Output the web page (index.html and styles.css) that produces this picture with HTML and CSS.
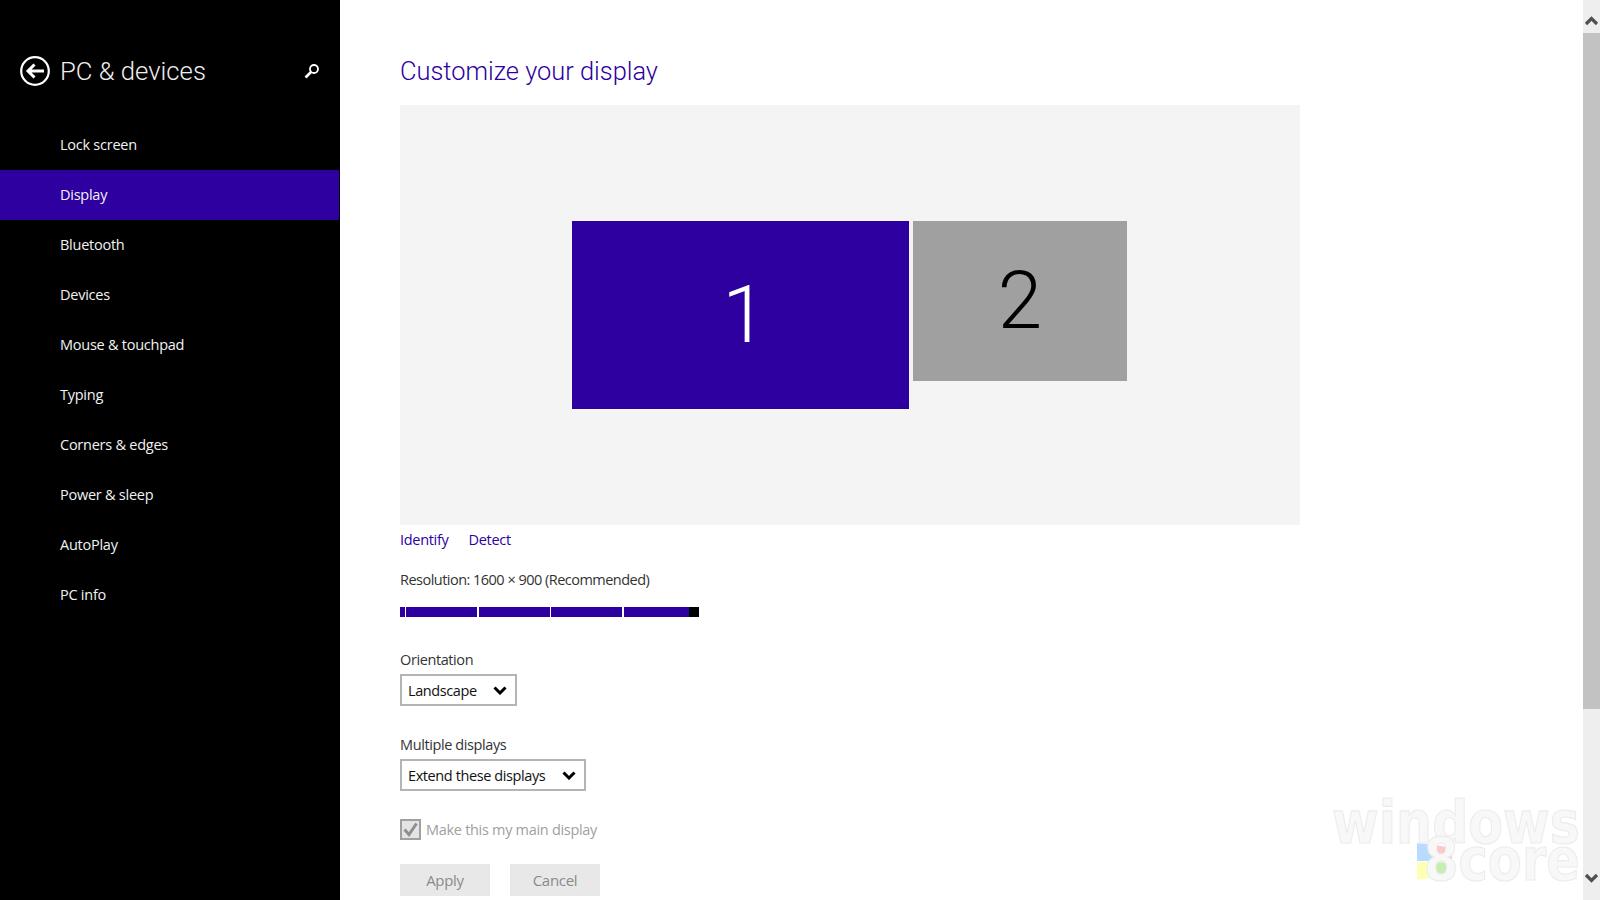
FILE: index.html
```html
<!DOCTYPE html>
<html lang="en">
<head>
<meta charset="utf-8">
<title>PC &amp; devices</title>
<link rel="stylesheet" href="styles.css">
</head>
<body>
<div class="app">
  <aside class="sidebar">
    <header class="side-head">
      <svg class="back" width="32" height="32" viewBox="0 0 32 32"><circle cx="16" cy="16" r="13.8" fill="none" stroke="#fff" stroke-width="2.2"/><path d="M25 16H10M15.500 9.500L9 16l6.500 6.500" fill="none" stroke="#fff" stroke-width="3"/></svg>
      <h1 class="side-title">PC &amp; devices</h1>
      <svg class="search" width="16" height="16" viewBox="0 0 16 16"><circle cx="10" cy="6" r="4" fill="none" stroke="#fff" stroke-width="1.800"/><path d="M7 9L1.500 14.500" stroke="#fff" stroke-width="2.600"/></svg>
    </header>
    <nav class="nav">
      <a class="nav-item">Lock screen</a>
      <a class="nav-item active">Display</a>
      <a class="nav-item">Bluetooth</a>
      <a class="nav-item">Devices</a>
      <a class="nav-item">Mouse &amp; touchpad</a>
      <a class="nav-item">Typing</a>
      <a class="nav-item">Corners &amp; edges</a>
      <a class="nav-item">Power &amp; sleep</a>
      <a class="nav-item">AutoPlay</a>
      <a class="nav-item">PC info</a>
    </nav>
  </aside>
  <main class="content">
    <h2 class="page-title">Customize your display</h2>
    <section class="arrange">
      <div class="monitors">
        <div class="monitor primary"><span>1</span></div>
        <div class="monitor secondary"><span>2</span></div>
      </div>
    </section>
    <div class="links"><a>Identify</a><a>Detect</a></div>
    <p class="res-label">Resolution: 1600 × 900 (Recommended)</p>
    <div class="slider">
      <div class="fill"><i></i><i></i><i></i><i></i></div>
      <div class="thumb"></div>
    </div>
    <label class="field-label first">Orientation</label>
    <div class="select s-orient">Landscape<svg class="chev" width="14" height="9" viewBox="0 0 14 9"><path d="M1.500 1.500L7 7l5.500-5.500" fill="none" stroke="#000" stroke-width="3"/></svg></div>
    <label class="field-label second">Multiple displays</label>
    <div class="select s-multi">Extend these displays<svg class="chev" width="14" height="9" viewBox="0 0 14 9"><path d="M1.500 1.500L7 7l5.500-5.500" fill="none" stroke="#000" stroke-width="3"/></svg></div>
    <div class="check-row">
      <span class="check"><svg width="17" height="17" viewBox="0 0 17 17"><path d="M2.500 8.500l4.500 5L14.500 2.500" fill="none" stroke="#8f8f8f" stroke-width="3"/></svg></span>
      <span>Make this my main display</span>
    </div>
    <div class="buttons"><button class="btn">Apply</button><button class="btn">Cancel</button></div>
  </main>
  <div class="scrollbar">
    <svg width="17" height="33" viewBox="0 0 17 33"><path d="M3 24l5.500-5.500 5.500 5.500" fill="none" stroke="#505050" stroke-width="3.200"/></svg>
    <div class="sb-thumb"></div>
    <svg class="sb-down" width="17" height="33" viewBox="0 0 17 33"><path d="M3 9l5.500 5.500 5.500-5.500" fill="none" stroke="#505050" stroke-width="3.200"/></svg>
  </div>
  <svg class="watermark" width="320" height="128" viewBox="0 0 320 128">
    <polygon points="137,71 155,73 155,89 137,89" fill="#b8dcff"/>
    <polygon points="155,73 172,76 172,90 155,89" fill="#ffc8c8"/>
    <polygon points="137,90 155,90 155,105 137,108" fill="#ffffb4"/>
    <polygon points="155,90 172,91 172,104 155,105" fill="#c4efb0"/>
    <text class="wm-text" x="52" y="71" font-size="58" textLength="248" lengthAdjust="spacingAndGlyphs">windows</text>
    <text class="wm-text" x="144" y="108" font-size="58" textLength="156" lengthAdjust="spacingAndGlyphs">8core</text>
  </svg>
</div>
</body>
</html>
```
FILE: styles.css
```css
* { box-sizing: border-box; }
html, body { margin: 0; height: 900px; overflow: hidden; background: #fff; }
body { font-family: "Open Sans", "Noto Sans", sans-serif; font-size: 15px; color: #222; }
.app { position: relative; display: flex; width: 1600px; height: 900px; overflow: hidden; }

.sidebar { flex: 0 0 340px; background: #000; color: #fff; }
.side-head { display: flex; align-items: center; height: 120px; padding: 42px 20px 20px 19px; }
.back { flex: none; margin-right: 9px; }
.side-title { flex: 1; margin: 0; font-family: "Roboto", sans-serif; font-weight: 300; font-size: 25.700px; line-height: 40px; color: #eee; }
.search { flex: none; }
.nav { display: flex; flex-direction: column; }
.nav-item { display: block; height: 50px; padding-left: 60px; line-height: 49px; font-size: 14.500px; letter-spacing: -0.250px; color: #f2f2f2; }
.nav-item.active { background: #2d009f; margin-right: 1px; }

.content { flex: 1; padding: 51px 0 0 60px; min-width: 0; }
.page-title { margin: 0; height: 54px; font-family: "Roboto", sans-serif; font-weight: 300; font-size: 25.400px; line-height: 40px; color: #2d009f; }
.arrange { width: 900px; height: 420px; background: #f4f4f4; padding: 116px 0 0 172px; }
.monitors { display: flex; align-items: flex-start; gap: 4px; }
.monitor { display: flex; align-items: center; justify-content: center; font-family: "Roboto", sans-serif; font-weight: 300; font-size: 80px; }
.monitor.primary { width: 337px; height: 188px; padding-left: 8px; background: #2d009f; color: #fff; }
.monitor.secondary { width: 214px; height: 160px; background: #a0a0a0; color: #000; }

.links { display: flex; gap: 20px; height: 30px; margin-top: 4px; line-height: 22px; color: #2d009f; letter-spacing: -0.300px; font-size: 14.500px; }
.res-label { margin: 10px 0 0; height: 30px; line-height: 22px; letter-spacing: -0.520px; font-size: 14.500px; color: #333; }
.slider { display: flex; width: 299px; height: 10px; margin-top: 8px; }
.fill { flex: 1; background: #2d009f; position: relative; display: flex; }
.fill i { display: block; width: 1.400px; background: #fff; margin-left: 71px; }
.fill i:first-child { margin-left: 5px; }
.thumb { flex: 0 0 10px; background: #000; }

.field-label { display: block; height: 22px; line-height: 22px; font-size: 14.500px; letter-spacing: -0.400px; color: #333; }
.field-label.first { margin-top: 32px; }
.field-label.second { margin-top: 28px; }
.select { display: flex; align-items: center; justify-content: space-between; height: 32px; margin-top: 3px; padding: 0 8px 0 6px; border: 2px solid #b4b4b4; font-size: 14.500px; letter-spacing: -0.400px; color: #111; }
.s-orient { width: 117px; }
.s-multi { width: 186px; }
.chev { flex: none; }

.check-row { display: flex; align-items: center; gap: 5px; margin-top: 28px; height: 21px; color: #a0a0a0; font-size: 14.500px; letter-spacing: -0.300px; }
.check { display: flex; align-items: center; justify-content: center; width: 21px; height: 21px; border: 2px solid #a0a0a0; background: #e4e4e4; }

.buttons { display: flex; gap: 20px; margin-top: 24px; }
.btn { width: 90px; height: 32px; padding: 0; border: 0; background: #e8e8e8; color: #8a8a8a; font: inherit; font-size: 15px; font-weight: 500; letter-spacing: -0.300px; }

.scrollbar { position: absolute; right: 0; top: 0; width: 17px; height: 900px; background: #eeeeee; display: flex; flex-direction: column; }
.sb-thumb { height: 676px; background: #c2c2c2; }
.sb-down { position: absolute; bottom: 1px; left: 0; }

.watermark { position: absolute; left: 1280px; top: 772px; pointer-events: none; }
.wm-text { font-family: "DejaVu Sans", sans-serif; font-weight: 700; fill: #f8f8f8; stroke: #ececec; stroke-width: 1.200; }
```
